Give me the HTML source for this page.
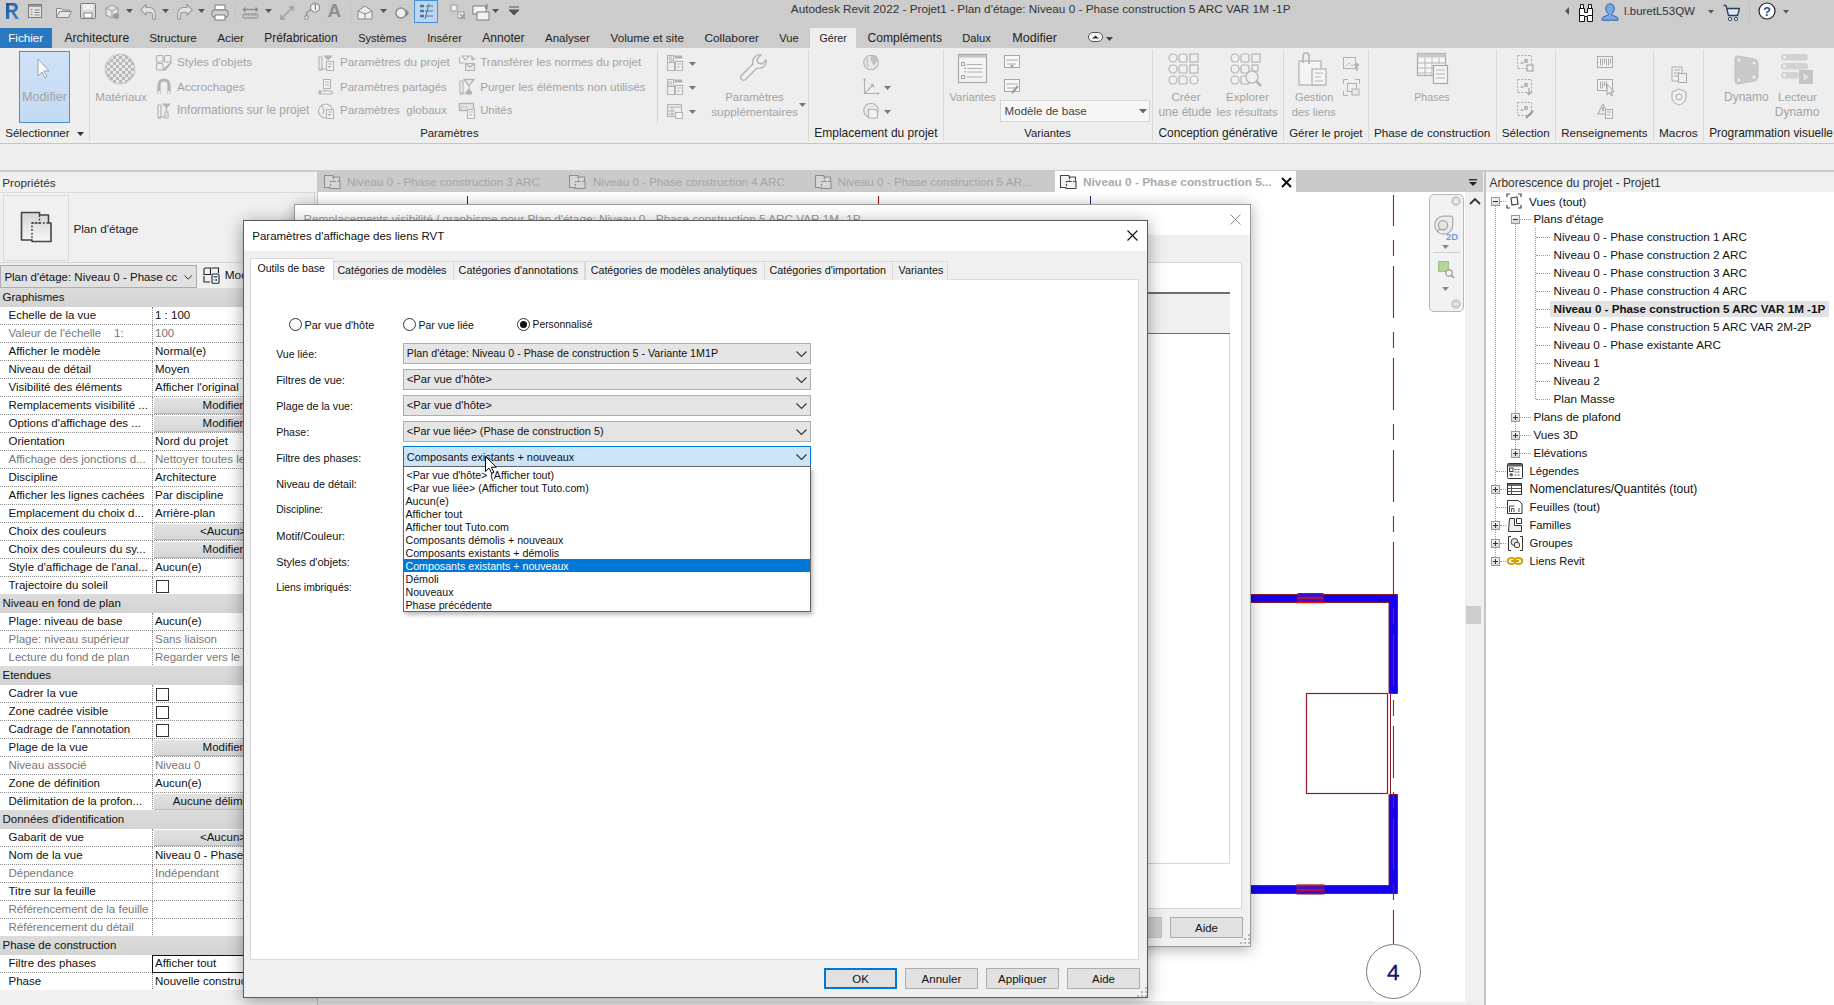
<!DOCTYPE html><html><head><meta charset="utf-8"><style>
html,body{margin:0;padding:0;width:1834px;height:1005px;overflow:hidden;background:#eee;}
body{position:relative;font-family:"Liberation Sans",sans-serif;}
body>div, .a{position:absolute;box-sizing:border-box;}
.t{position:absolute;white-space:nowrap;line-height:16px;height:16px;}
svg{position:absolute;overflow:visible}
</style></head><body>
<div style="left:0px;top:0px;width:1834px;height:48px;background:#cccccc"></div>
<div style="left:0px;top:48px;width:1834px;height:95px;background:#eeeeee"></div>
<div style="left:0px;top:143px;width:1834px;height:1px;background:#c6c6c6"></div>
<div style="left:0px;top:144px;width:1834px;height:26px;background:#eeeeee"></div>
<div style="left:0px;top:170px;width:1834px;height:2px;background:#cacaca"></div>
<div style="left:0px;top:172px;width:317px;height:833px;background:#f0f0f0"></div>
<div style="left:317px;top:172px;width:1px;height:833px;background:#c9c9c9"></div>
<div style="left:318px;top:172px;width:1165px;height:20px;background:#cacaca"></div>
<div style="left:318px;top:192px;width:1147px;height:810px;background:#ffffff"></div>
<div style="left:1465px;top:192px;width:18px;height:810px;background:#f0f0f0"></div>
<div style="left:318px;top:1001px;width:1056px;height:4px;background:#ececec"></div>
<div style="left:1483px;top:172px;width:2px;height:833px;background:#f0f0f0"></div>
<div style="left:1484px;top:172px;width:2px;height:833px;background:#c4c4c4"></div>
<div style="left:1486px;top:172px;width:348px;height:20px;background:#f0f0f0"></div>
<div style="left:1486px;top:192px;width:348px;height:813px;background:#ffffff"></div>
<div class="t" style="left:790.8px;top:0.6px;font-size:11.75px;color:#333;">Autodesk Revit 2022 - Projet1 - Plan d'étage: Niveau 0 - Phase construction 5 ARC VAR 1M -1P</div>
<svg style="left:5px;top:2px" width="15" height="18" viewBox="0 0 15 18"><defs><linearGradient id="rl" x1="0" y1="0" x2="1" y2="1"><stop offset="0" stop-color="#1b4f94"/><stop offset="1" stop-color="#3a8fd8"/></linearGradient></defs><path d="M1 1H7.5C11.5 1 13 3 13 5.5C13 8 11.5 9.5 9.2 10L14 17H10.5L6.5 10.3H4.2V17H1Z M4.2 3.6V7.8H7.2C9 7.8 9.8 7 9.8 5.7C9.8 4.4 9 3.6 7.2 3.6Z" fill="url(#rl)"/></svg>
<svg style="left:28px;top:4px" width="14" height="14" viewBox="0 0 14 14"><rect x="0.5" y="0.5" width="13" height="13" fill="#e4e4e4" stroke="#7a7a7a"/><rect x="1" y="1" width="12" height="2" fill="#9a9a9a"/><path d="M2.5 5.5h2M2.5 8h2M2.5 10.5h2M6.5 6h5M6.5 8.5h5M6.5 11h5" stroke="#7a7a7a" stroke-width="0.9"/></svg>
<svg style="left:56px;top:5px" width="16" height="14" viewBox="0 0 16 14"><path d="M0.5 3.5h5l1 1.5h7v2H4l-3.5 6z" fill="#eee" stroke="#8a8a8a"/><path d="M0.5 12.5l3-6h12l-3 6z" fill="#e4e4e4" stroke="#8a8a8a"/></svg>
<svg style="left:80px;top:3px" width="16" height="16" viewBox="0 0 16 16"><rect x="0.5" y="0.5" width="15" height="15" rx="1" fill="#d8d8d8" stroke="#7a7a7a"/><rect x="3" y="1" width="10" height="6" fill="#eee"/><rect x="4" y="10" width="8" height="5" fill="#fff" stroke="#888"/></svg>
<svg style="left:104px;top:3px" width="16" height="17" viewBox="0 0 16 17"><path d="M2 5l6-3 6 3v7l-6 3-6-3z" fill="#e3e3e3" stroke="#9a9a9a"/><path d="M2 5l6 3 6-3M8 8v7" stroke="#9a9a9a" fill="none"/><circle cx="12" cy="13" r="3" fill="#9a9a9a"/></svg>
<svg style="left:126px;top:9px" width="7" height="4" viewBox="0 0 7 4"><path d="M0 0H7L3.5 4Z" fill="#555"/></svg>
<svg style="left:140px;top:4px" width="16" height="16" viewBox="0 0 16 16"><path d="M6 0.5L0.7 5.8L6 11.1V8.2H9.8C11.6 8.2 12.6 9.2 12.6 11V15H15.3V10.2C15.3 6.2 12.8 3.5 9.8 3.5H6Z" fill="#e2e2e2" stroke="#9a9a9a" stroke-width="1.1" stroke-linejoin="round"/></svg>
<svg style="left:162px;top:9px" width="7" height="4" viewBox="0 0 7 4"><path d="M0 0H7L3.5 4Z" fill="#555"/></svg>
<svg style="left:177px;top:4px" width="16" height="16" viewBox="0 0 16 16"><path d="M10 0.5L15.3 5.8L10 11.1V8.2H6.2C4.4 8.2 3.4 9.2 3.4 11V15H0.7V10.2C0.7 6.2 3.2 3.5 6.2 3.5H10Z" fill="#e2e2e2" stroke="#9a9a9a" stroke-width="1.1" stroke-linejoin="round"/></svg>
<svg style="left:198px;top:9px" width="7" height="4" viewBox="0 0 7 4"><path d="M0 0H7L3.5 4Z" fill="#555"/></svg>
<svg style="left:211px;top:4px" width="18" height="17" viewBox="0 0 18 17"><rect x="4" y="1" width="10" height="5" fill="#fff" stroke="#7a7a7a"/><rect x="1" y="6" width="16" height="7" rx="2" fill="#d0d0d0" stroke="#7a7a7a"/><rect x="4" y="11" width="10" height="5" fill="#fff" stroke="#7a7a7a"/></svg>
<div style="left:235px;top:3px;width:1px;height:20px;background:#c2c2c2"></div>
<svg style="left:242px;top:5px" width="17" height="14" viewBox="0 0 17 14"><path d="M1.5 4.5h14" stroke="#8a8a8a" stroke-width="1.4"/><path d="M0.5 4.5l3-3v6zM16.5 4.5l-3-3v6z" fill="#8a8a8a"/><rect x="1" y="9" width="15" height="4" rx="1" fill="#c8c8c8" stroke="#8a8a8a"/><path d="M4 9v2M7 9v2M10 9v2M13 9v2" stroke="#8a8a8a" stroke-width="0.8"/></svg>
<svg style="left:265px;top:9px" width="7" height="4" viewBox="0 0 7 4"><path d="M0 0H7L3.5 4Z" fill="#555"/></svg>
<svg style="left:279px;top:5px" width="16" height="16" viewBox="0 0 16 16"><path d="M2 14L14 2M2 10v4h4M10 2h4v4" fill="none" stroke="#9a9a9a" stroke-width="1.3"/></svg>
<svg style="left:303px;top:2px" width="17" height="18" viewBox="0 0 17 18"><path d="M12 0.8l4.3 2.4v4.8L12 10.4 7.7 8V3.2z" fill="#f2f2f2" stroke="#8a8a8a" stroke-width="1.1"/><path d="M11.2 3.2l1.2-.8V8" fill="none" stroke="#777" stroke-width="1"/><path d="M8 7.5L3.5 11V14.5" fill="none" stroke="#8a8a8a" stroke-width="1.1"/><rect x="2" y="14" width="3" height="3" fill="#fff" stroke="#8a8a8a"/></svg>
<div class="t" style="left:327.5px;top:3.0px;font-size:19.00px;color:#8e8e8e;font-weight:bold;">A</div>
<div style="left:350px;top:3px;width:1px;height:20px;background:#c2c2c2"></div>
<svg style="left:357px;top:4px" width="16" height="16" viewBox="0 0 16 16"><path d="M1 7l7-5 7 5v8H1z" fill="#eee" stroke="#8a8a8a"/><path d="M1 7l7 3 7-3M8 10v5" fill="none" stroke="#8a8a8a"/></svg>
<svg style="left:380px;top:9px" width="7" height="4" viewBox="0 0 7 4"><path d="M0 0H7L3.5 4Z" fill="#555"/></svg>
<svg style="left:394px;top:5px" width="16" height="16" viewBox="0 0 16 16"><circle cx="7" cy="8" r="5" fill="#eee" stroke="#8a8a8a" stroke-width="1.5"/><path d="M12 4l3 4-3 4z" fill="#8a8a8a"/></svg>
<div style="left:414px;top:0px;width:24px;height:23px;background:#b9d7f4;border:1px solid #4a8fd6"></div>
<svg style="left:419px;top:4px" width="15" height="15" viewBox="0 0 15 15"><path d="M1 2h4M1 7h4M1 12h4" stroke="#5a6f8a" stroke-width="2.5"/><path d="M7 2h7M6 7h8M6 12h8M10 0L6 15" stroke="#5a6f8a" stroke-width="1"/></svg>
<svg style="left:450px;top:4px" width="16" height="16" viewBox="0 0 16 16"><rect x="1" y="1" width="6" height="6" fill="#eee" stroke="#9a9a9a"/><rect x="8" y="8" width="6" height="6" fill="#eee" stroke="#9a9a9a"/><path d="M10 10l5 5M15 10l-5 5" stroke="#9a9a9a" stroke-width="1.5"/></svg>
<svg style="left:472px;top:3px" width="18" height="18" viewBox="0 0 18 18"><rect x="1" y="3" width="13" height="8" fill="#f3f3f3" stroke="#7a7a7a"/><rect x="5" y="9" width="12" height="8" fill="#f3f3f3" stroke="#7a7a7a"/><path d="M15 1v5l-2-2" fill="none" stroke="#7a7a7a"/></svg>
<svg style="left:492px;top:9px" width="7" height="4" viewBox="0 0 7 4"><path d="M0 0H7L3.5 4Z" fill="#555"/></svg>
<svg style="left:509px;top:6px" width="10" height="10" viewBox="0 0 10 10"><path d="M0 1h10M0 4h10L5 9z" fill="#555" stroke="#555"/></svg>
<svg style="left:1565px;top:7px" width="5" height="9" viewBox="0 0 5 9"><path d="M4 0v8L0 4z" fill="#555"/></svg>
<svg style="left:1578px;top:4px" width="16" height="18" viewBox="0 0 16 18"><path d="M2.5 0.5h3v4h-3zM10.5 0.5h3v4h-3z" fill="#fff" stroke="#111"/><path d="M1.5 4.5h5v4h3v-4h5v13h-5v-5h-3v5h-5z" fill="#fff" stroke="#111" stroke-linejoin="round"/><path d="M1.5 11.5h5M9.5 11.5h5" stroke="#111"/></svg>
<svg style="left:1602px;top:3px" width="16" height="18" viewBox="0 0 16 18"><path d="M8 0.8c2.8 0 4.2 2.2 4.2 4.8 0 2.4-1.2 4.4-2.6 5.2v1l5.4 2.4c.6.3.9.8.9 1.4v1.6H0.1v-1.6c0-.6.3-1.1.9-1.4l5.4-2.4v-1C5 10 3.8 8 3.8 5.6 3.8 3 5.2 0.8 8 0.8z" fill="#7aa6e6" stroke="#2d5fb0" stroke-width="1"/></svg>
<div class="t" style="left:1624.0px;top:3.0px;font-size:11.51px;color:#333;">l.buretL53QW</div>
<svg style="left:1708px;top:10px" width="6" height="4" viewBox="0 0 6 4"><path d="M0 0h6L3 3.5z" fill="#555"/></svg>
<svg style="left:1723px;top:4px" width="18" height="18" viewBox="0 0 18 18"><path d="M0.5 1.5h2.5l2.5 10h9l2-7H4" fill="#dfe9f5" stroke="#2a3f5f" stroke-width="1.3" stroke-linejoin="round"/><circle cx="7" cy="15" r="1.6" fill="#fff" stroke="#2a3f5f"/><circle cx="13" cy="15" r="1.6" fill="#fff" stroke="#2a3f5f"/></svg>
<div style="left:1749px;top:2px;width:1px;height:20px;background:#bdbdbd"></div>
<svg style="left:1758px;top:2px" width="18" height="18" viewBox="0 0 18 18"><circle cx="9" cy="9" r="8" fill="#fff" stroke="#1d1d1d" stroke-width="1.2"/><text x="9" y="13.8" text-anchor="middle" font-family="Liberation Sans" font-weight="bold" font-size="13" fill="#1f4e9a">?</text></svg>
<svg style="left:1783px;top:10px" width="6" height="4" viewBox="0 0 6 4"><path d="M0 0h6L3 3.5z" fill="#555"/></svg>
<div style="left:0px;top:28px;width:52px;height:20px;background:#2a78c2"></div>
<div class="t" style="left:8.2px;top:29.5px;font-size:11.67px;color:#ffffff;">Fichier</div>
<div style="left:810px;top:28px;width:46px;height:20px;background:#eeeeee"></div>
<div class="t" style="left:64.4px;top:29.5px;font-size:12.15px;color:#222;">Architecture</div>
<div class="t" style="left:149.2px;top:29.5px;font-size:11.76px;color:#222;">Structure</div>
<div class="t" style="left:217.2px;top:29.5px;font-size:11.76px;color:#222;">Acier</div>
<div class="t" style="left:264.3px;top:29.5px;font-size:11.88px;color:#222;">Préfabrication</div>
<div class="t" style="left:358.2px;top:29.5px;font-size:11.03px;color:#222;">Systèmes</div>
<div class="t" style="left:427.2px;top:29.5px;font-size:11.15px;color:#222;">Insérer</div>
<div class="t" style="left:482.2px;top:29.5px;font-size:12.14px;color:#222;">Annoter</div>
<div class="t" style="left:545.0px;top:29.5px;font-size:11.52px;color:#222;">Analyser</div>
<div class="t" style="left:610.5px;top:29.5px;font-size:11.70px;color:#222;">Volume et site</div>
<div class="t" style="left:704.4px;top:29.5px;font-size:11.84px;color:#222;">Collaborer</div>
<div class="t" style="left:779.3px;top:29.5px;font-size:11.08px;color:#222;">Vue</div>
<div class="t" style="left:819.6px;top:29.5px;font-size:10.64px;color:#222;">Gérer</div>
<div class="t" style="left:867.6px;top:29.5px;font-size:12.06px;color:#222;">Compléments</div>
<div class="t" style="left:962.3px;top:29.5px;font-size:11.15px;color:#222;">Dalux</div>
<div class="t" style="left:1012.2px;top:29.5px;font-size:12.60px;color:#222;">Modifier</div>
<svg style="left:1088px;top:32px" width="15" height="10" viewBox="0 0 15 10"><rect x="0.5" y="0.5" width="14" height="9" rx="4.5" fill="#f4f4f4" stroke="#555"/><path d="M4 6.5l3.5-3 3.5 3z" fill="#333"/></svg>
<svg style="left:1106px;top:37px" width="7" height="4" viewBox="0 0 7 4"><path d="M0 0H7L3.5 4Z" fill="#444"/></svg>
<div style="left:89px;top:50px;width:1px;height:91px;background:#d9d9d9"></div>
<div style="left:808px;top:50px;width:1px;height:91px;background:#d9d9d9"></div>
<div style="left:943px;top:50px;width:1px;height:91px;background:#d9d9d9"></div>
<div style="left:1152px;top:50px;width:1px;height:91px;background:#d9d9d9"></div>
<div style="left:1283px;top:50px;width:1px;height:91px;background:#d9d9d9"></div>
<div style="left:1368px;top:50px;width:1px;height:91px;background:#d9d9d9"></div>
<div style="left:1496px;top:50px;width:1px;height:91px;background:#d9d9d9"></div>
<div style="left:1555px;top:50px;width:1px;height:91px;background:#d9d9d9"></div>
<div style="left:1653px;top:50px;width:1px;height:91px;background:#d9d9d9"></div>
<div style="left:1703px;top:50px;width:1px;height:91px;background:#d9d9d9"></div>
<div style="left:657px;top:52px;width:1px;height:71px;background:#d0d0d0"></div>
<div style="left:19px;top:51px;width:51px;height:72px;background:linear-gradient(#cfe2f6,#c3daf3);border:1px solid #4f8fd0"></div>
<svg style="left:37px;top:58px" width="14" height="22" viewBox="0 0 14 22"><path d="M1 1v17l4-4 3 6 2-1-3-6h5z" fill="#f6f9fc" stroke="#9aa4b0" stroke-width="1"/></svg>
<div class="t" style="left:22.1px;top:88.5px;font-size:12.60px;color:#a3a3a3;">Modifier</div>
<div class="t" style="left:5.2px;top:125.0px;font-size:11.60px;color:#222;">Sélectionner</div>
<svg style="left:76.5px;top:132px" width="7" height="4" viewBox="0 0 7 4"><path d="M0 0H7L3.5 4Z" fill="#333"/></svg>
<svg style="left:104px;top:53px" width="32" height="32" viewBox="0 0 32 32"><defs><pattern id="chk" width="6" height="6" patternUnits="userSpaceOnUse"><rect width="6" height="6" fill="#e8e8e8"/><rect width="3" height="3" fill="#b8b8b8"/><rect x="3" y="3" width="3" height="3" fill="#b8b8b8"/></pattern></defs><circle cx="16" cy="16" r="15" fill="url(#chk)" stroke="#c4c4c4"/></svg>
<div class="t" style="left:95.2px;top:88.5px;font-size:11.78px;color:#a3a3a3;">Matériaux</div>
<svg style="left:156px;top:55px" width="16" height="16" viewBox="0 0 16 16"><rect x="0.5" y="0.5" width="6.5" height="6.5" rx="1" fill="none" stroke="#b2b2b2" stroke-width="1.1"/><rect x="8.5" y="0.5" width="6.5" height="6.5" rx="1" fill="none" stroke="#b2b2b2" stroke-width="1.1"/><rect x="0.5" y="8.5" width="6.5" height="6.5" rx="1" fill="none" stroke="#b2b2b2" stroke-width="1.1"/><path d="M6 15l9-8 1 1-7 8z" fill="#b2b2b2"/></svg>
<div class="t" style="left:177.0px;top:54.0px;font-size:11.69px;color:#a3a3a3;">Styles d'objets</div>
<svg style="left:156px;top:79px" width="16" height="16" viewBox="0 0 16 16"><path d="M3 15V6a5 5 0 0 1 10 0v9" fill="none" stroke="#b2b2b2" stroke-width="3.2"/><path d="M3 12v3M13 12v3" stroke="#f4f4f4" stroke-width="1.6"/></svg>
<div class="t" style="left:177.0px;top:78.7px;font-size:11.71px;color:#a3a3a3;">Accrochages</div>
<svg style="left:156px;top:103px" width="16" height="16" viewBox="0 0 16 16"><path d="M2 2v12a1.5 1.5 0 0 0 3 0V2zM2 14h7" fill="none" stroke="#b2b2b2" stroke-width="1.1"/><path d="M6 0.5h9l-4.5 5z" fill="#b2b2b2"/><path d="M10.5 5v4M9 9h3v6H9z" fill="none" stroke="#b2b2b2" stroke-width="1.1"/></svg>
<div class="t" style="left:177.0px;top:102.4px;font-size:12.04px;color:#a3a3a3;">Informations sur le projet</div>
<svg style="left:318px;top:55px" width="16" height="16" viewBox="0 0 16 16"><path d="M1 2v12a1.5 1.5 0 0 0 3 0V2zM1 14h7" fill="none" stroke="#b2b2b2" stroke-width="1.1"/><path d="M5 0.5h10l-5 5z" fill="#b2b2b2"/><rect x="8.5" y="6.5" width="7" height="9" fill="#f2f2f2" stroke="#b2b2b2"/><path d="M10 9h4M10 12h2l1-1" stroke="#b2b2b2"/></svg>
<div class="t" style="left:340.0px;top:54.0px;font-size:11.76px;color:#a3a3a3;white-space:pre">Paramètres du projet</div>
<svg style="left:318px;top:79px" width="16" height="16" viewBox="0 0 16 16"><rect x="5.5" y="0.5" width="7" height="9" fill="#f2f2f2" stroke="#b2b2b2"/><path d="M7 3h4M7 6h4" stroke="#b2b2b2"/><rect x="0.5" y="11.5" width="3" height="4" fill="#b2b2b2"/><path d="M4 12c3-1 5 0 8 0s3 3 0 3H4" fill="none" stroke="#b2b2b2" stroke-width="1.1"/></svg>
<div class="t" style="left:340.0px;top:78.7px;font-size:11.44px;color:#a3a3a3;white-space:pre">Paramètres partagés</div>
<svg style="left:318px;top:103px" width="16" height="16" viewBox="0 0 16 16"><circle cx="7.5" cy="8" r="7" fill="none" stroke="#b2b2b2" stroke-width="1.1"/><path d="M4 3l2 4-1 4" fill="none" stroke="#b2b2b2" stroke-width="1.1"/><rect x="8.5" y="6.5" width="7" height="9" fill="#f2f2f2" stroke="#b2b2b2"/><path d="M10 9h4M10 12h2l1-1" stroke="#b2b2b2"/></svg>
<div class="t" style="left:340.0px;top:102.4px;font-size:11.58px;color:#a3a3a3;white-space:pre">Paramètres  globaux</div>
<svg style="left:459px;top:55px" width="16" height="16" viewBox="0 0 16 16"><path d="M0.5 2v6h5M3 1h7l-3.5 4z" fill="none" stroke="#b2b2b2" stroke-width="1.1"/><path d="M11 1c2 0 3 1 3 3M12 3l2 2 2-2" fill="none" stroke="#b2b2b2" stroke-width="1.1"/><rect x="6.5" y="8.5" width="9" height="7" fill="#e6e6e6" stroke="#b2b2b2"/><path d="M7 9l4 3 4-3" fill="none" stroke="#b2b2b2" stroke-width="1.1"/></svg>
<div class="t" style="left:480.2px;top:54.0px;font-size:11.59px;color:#a3a3a3;">Transférer les normes du projet</div>
<svg style="left:459px;top:79px" width="16" height="16" viewBox="0 0 16 16"><path d="M1 2v12a1.5 1.5 0 0 0 3 0V2zM1 14h6" fill="none" stroke="#b2b2b2" stroke-width="1.1"/><path d="M5 0.5h10l-5 6z" fill="none" stroke="#b2b2b2" stroke-width="1.3"/><path d="M10 6v4M7.5 13l2.5-3 2.5 3v2h-5z" fill="#b2b2b2" stroke="#b2b2b2"/></svg>
<div class="t" style="left:480.2px;top:78.7px;font-size:11.68px;color:#a3a3a3;">Purger les éléments non utilisés</div>
<svg style="left:459px;top:103px" width="16" height="16" viewBox="0 0 16 16"><rect x="0.5" y="0.5" width="14" height="7" fill="#e4e4e4" stroke="#b2b2b2" stroke-width="1.3"/><path d="M3 3v3M7 3v2" stroke="#b2b2b2"/><rect x="8.5" y="6.5" width="7" height="9" fill="#f2f2f2" stroke="#b2b2b2"/><path d="M10 9h4M10 12h3" stroke="#b2b2b2"/></svg>
<div class="t" style="left:480.2px;top:102.4px;font-size:11.33px;color:#a3a3a3;">Unités</div>
<div class="t" style="left:420.3px;top:125.0px;font-size:11.28px;color:#222;">Paramètres</div>
<svg style="left:667px;top:55px" width="16" height="16" viewBox="0 0 16 16"><rect x="0.5" y="0.5" width="6" height="7" fill="none" stroke="#b2b2b2"/><path d="M5 2H2v2h3v2H2" stroke="#b2b2b2" fill="none"/><rect x="7.5" y="0.5" width="8" height="3" fill="#b2b2b2"/><rect x="0.5" y="7.5" width="7" height="8" fill="none" stroke="#b2b2b2"/><rect x="8.5" y="6.5" width="7" height="9" fill="#f2f2f2" stroke="#b2b2b2"/><path d="M10 9h4M10 12h3" stroke="#b2b2b2"/></svg>
<svg style="left:689px;top:62px" width="7" height="4" viewBox="0 0 7 4"><path d="M0 0H7L3.5 4Z" fill="#777"/></svg>
<svg style="left:667px;top:79px" width="16" height="16" viewBox="0 0 16 16"><rect x="0.5" y="0.5" width="6" height="7" fill="none" stroke="#b2b2b2"/><path d="M2 2v5M4 2v5" stroke="#b2b2b2"/><rect x="7.5" y="0.5" width="8" height="3" fill="#b2b2b2"/><rect x="0.5" y="7.5" width="7" height="8" fill="none" stroke="#b2b2b2"/><rect x="8.5" y="6.5" width="7" height="9" fill="#f2f2f2" stroke="#b2b2b2"/><path d="M10 9h4M10 12h3" stroke="#b2b2b2"/></svg>
<svg style="left:689px;top:86px" width="7" height="4" viewBox="0 0 7 4"><path d="M0 0H7L3.5 4Z" fill="#777"/></svg>
<svg style="left:667px;top:103px" width="16" height="16" viewBox="0 0 16 16"><rect x="0.5" y="1.5" width="14" height="12" fill="none" stroke="#b2b2b2"/><path d="M1 4h14M5 4v10M1 8h7M1 11h7" stroke="#b2b2b2"/><rect x="8.5" y="9.5" width="7" height="6" fill="#f2f2f2" stroke="#b2b2b2"/></svg>
<svg style="left:689px;top:110px" width="7" height="4" viewBox="0 0 7 4"><path d="M0 0H7L3.5 4Z" fill="#777"/></svg>
<svg style="left:739px;top:54px" width="30" height="30" viewBox="0 0 30 30"><path d="M27 6a7 7 0 0 1-9 8L6 26a3 3 0 0 1-4-4L14 10a7 7 0 0 1 8-9l-4 4 1 4 4 1z" fill="#f0f0f0" stroke="#b0b0b0" stroke-width="1.3"/></svg>
<div class="t" style="left:725.3px;top:88.8px;font-size:11.32px;color:#a3a3a3;">Paramètres</div>
<div class="t" style="left:711.2px;top:103.5px;font-size:11.82px;color:#a3a3a3;">supplémentaires</div>
<svg style="left:799px;top:103px" width="7" height="4" viewBox="0 0 7 4"><path d="M0 0H7L3.5 4Z" fill="#777"/></svg>
<svg style="left:863px;top:54px" width="17" height="17" viewBox="0 0 17 17"><circle cx="8" cy="8.5" r="7.3" fill="#e6e6e6" stroke="#b4b4b4" stroke-width="1.1"/><path d="M3 4c1.5 1 2 2.5 1.2 4.5S4.5 12 5.5 13" fill="none" stroke="#bdbdbd" stroke-width="1.2"/><path d="M11 1.5a3 3 0 0 1 3 3c0 2-3 6.5-3 6.5s-3-4.5-3-6.5a3 3 0 0 1 3-3z" fill="#c4c4c4" stroke="#b0b0b0" stroke-width="0.8"/></svg>
<svg style="left:863px;top:78px" width="17" height="17" viewBox="0 0 17 17"><path d="M1.5 1v14.5H16M1.5 15.5L10 7" fill="none" stroke="#b0b0b0" stroke-width="1.1"/><path d="M7.5 6.5h3v3" fill="none" stroke="#b0b0b0"/><path d="M0 2.5l1.5-2 1.5 2M14.5 14l1.5 1.5-1.5 1.5" fill="none" stroke="#b0b0b0" stroke-width="0.9"/></svg>
<svg style="left:884px;top:86px" width="7" height="4" viewBox="0 0 7 4"><path d="M0 0H7L3.5 4Z" fill="#777"/></svg>
<svg style="left:863px;top:102px" width="17" height="17" viewBox="0 0 17 17"><circle cx="8" cy="8.5" r="7.3" fill="#e6e6e6" stroke="#b4b4b4" stroke-width="1.1"/><path d="M5.5 7.5h7l2 2v6.5h-9z" fill="#f2f2f2" stroke="#b0b0b0" stroke-width="1.1"/></svg>
<svg style="left:884px;top:110px" width="7" height="4" viewBox="0 0 7 4"><path d="M0 0H7L3.5 4Z" fill="#777"/></svg>
<div class="t" style="left:814.3px;top:125.0px;font-size:11.99px;color:#222;">Emplacement du projet</div>
<svg style="left:958px;top:54px" width="30" height="30" viewBox="0 0 30 30"><rect x="0.5" y="0.5" width="28" height="28" fill="#f4f4f4" stroke="#a8a8a8" stroke-width="1.2"/><rect x="1" y="1" width="27" height="2.5" fill="#c4c4c4"/><rect x="3.5" y="8.5" width="3" height="3" fill="#fff" stroke="#a0a0a0"/><rect x="3.5" y="21.5" width="3" height="3" fill="#fff" stroke="#a0a0a0"/><rect x="6.5" y="13.5" width="1.5" height="1.5" fill="#a0a0a0"/><rect x="6.5" y="17" width="1.5" height="1.5" fill="#a0a0a0"/><path d="M8.5 10.5h16M9.5 14.5h15M9.5 18h15M8.5 23h16" stroke="#aaa" stroke-width="0.9"/></svg>
<div class="t" style="left:949.4px;top:88.8px;font-size:11.18px;color:#a3a3a3;">Variantes</div>
<svg style="left:1004px;top:55px" width="16" height="16" viewBox="0 0 16 16"><rect x="0.5" y="0.5" width="15" height="12" fill="#f7f7f7" stroke="#a8a8a8"/><path d="M2 5h12M3 9h9" stroke="#aaa"/><path d="M6 10l4 0-2 3" fill="#8aa"/></svg>
<svg style="left:1004px;top:79px" width="16" height="16" viewBox="0 0 16 16"><rect x="0.5" y="0.5" width="15" height="12" fill="#f7f7f7" stroke="#a8a8a8"/><path d="M2 5h12M3 9h9" stroke="#aaa"/><path d="M8 14l6-7" stroke="#999" stroke-width="2"/></svg>
<div style="left:1000px;top:100px;width:150px;height:22px;background:#f7f7f7;border:1px solid #d6d6d6"></div>
<div class="t" style="left:1004.6px;top:103.0px;font-size:11.55px;color:#444;">Modèle de base</div>
<svg style="left:1139px;top:109px" width="8" height="5" viewBox="0 0 8 5"><path d="M0 0h8L4 4.5z" fill="#666"/></svg>
<div class="t" style="left:1024.3px;top:125.0px;font-size:11.25px;color:#222;">Variantes</div>
<svg style="left:1168px;top:53px" width="32" height="32" viewBox="0 0 32 32"><g fill="#f0f0f0" stroke="#b4b4b4" stroke-width="1.2"><circle cx="5" cy="5" r="4"/><rect x="11" y="1" width="8" height="8" rx="2"/><rect x="22" y="1" width="8" height="8"/><circle cx="5" cy="16" r="4"/><rect x="11" y="12" width="8" height="8" rx="2"/><rect x="22" y="12" width="8" height="8"/><circle cx="5" cy="27" r="4"/><rect x="11" y="23" width="8" height="8" rx="2"/><circle cx="26" cy="27" r="4"/></g></svg>
<div class="t" style="left:1171.5px;top:88.8px;font-size:11.60px;color:#a3a3a3;">Créer</div>
<div class="t" style="left:1158.5px;top:103.6px;font-size:11.91px;color:#a3a3a3;">une étude</div>
<svg style="left:1230px;top:53px" width="34" height="34" viewBox="0 0 34 34"><g fill="#f0f0f0" stroke="#b4b4b4" stroke-width="1.2"><circle cx="5" cy="5" r="4"/><rect x="11" y="1" width="8" height="8" rx="2"/><rect x="22" y="1" width="8" height="8"/><circle cx="5" cy="16" r="4"/><rect x="11" y="12" width="8" height="8" rx="2"/><rect x="22" y="12" width="6" height="6"/><circle cx="5" cy="27" r="4"/><rect x="11" y="23" width="8" height="8" rx="2"/><circle cx="22" cy="24" r="6"/><path d="M26 28l5 5" stroke-width="2.5"/></g></svg>
<div class="t" style="left:1226.0px;top:88.8px;font-size:11.55px;color:#a3a3a3;">Explorer</div>
<div class="t" style="left:1216.6px;top:103.6px;font-size:11.47px;color:#a3a3a3;">les résultats</div>
<div class="t" style="left:1158.4px;top:125.0px;font-size:11.93px;color:#222;">Conception générative</div>
<svg style="left:1297px;top:53px" width="32" height="34" viewBox="0 0 32 34"><rect x="2" y="8" width="22" height="24" fill="#f4f4f4" stroke="#b0b0b0" stroke-width="1.2"/><rect x="15" y="16" width="14" height="16" fill="#f4f4f4" stroke="#b0b0b0" stroke-width="1.2"/><path d="M18 20h8M18 24h6M18 28h8" stroke="#b8b8b8"/><path d="M6 10V3a3 3 0 0 1 6 0v8" fill="none" stroke="#b0b0b0" stroke-width="1.5"/></svg>
<div class="t" style="left:1295.0px;top:88.8px;font-size:11.14px;color:#a3a3a3;">Gestion</div>
<div class="t" style="left:1291.7px;top:103.6px;font-size:11.15px;color:#a3a3a3;">des liens</div>
<svg style="left:1343px;top:55px" width="17" height="17" viewBox="0 0 17 17"><rect x="0.5" y="2.5" width="12" height="11" fill="#f0f0f0" stroke="#b0b0b0"/><path d="M2 12l4-4 3 3 3-2" stroke="#bbb" fill="none"/><path d="M14 8v8M12 10h4" stroke="#aaa" stroke-width="1.4"/></svg>
<svg style="left:1343px;top:79px" width="17" height="17" viewBox="0 0 17 17"><path d="M0.5 5V0.5H5M12 0.5h4.5V5M0.5 12v4.5H5" fill="none" stroke="#b0b0b0"/><rect x="4.5" y="4.5" width="9" height="8" fill="#f0f0f0" stroke="#b0b0b0"/><rect x="9" y="10" width="7" height="6" fill="#e8e8e8" stroke="#b0b0b0"/></svg>
<div class="t" style="left:1289.2px;top:125.0px;font-size:11.47px;color:#222;">Gérer le projet</div>
<svg style="left:1417px;top:53px" width="32" height="32" viewBox="0 0 32 32"><rect x="0.5" y="0.5" width="28" height="22" fill="#f7f7f7" stroke="#a8a8a8" stroke-width="1.2"/><rect x="0.5" y="0.5" width="28" height="4" fill="#c8c8c8"/><path d="M1 10h28M1 15h28M1 20h14M8 5v17M15 5v17M22 5v6" stroke="#b4b4b4"/><rect x="16.5" y="12.5" width="14" height="18" fill="#f4f4f4" stroke="#a8a8a8" stroke-width="1.2"/><path d="M19 17h9M19 21h9M19 25h9" stroke="#b0b0b0"/></svg>
<div class="t" style="left:1414.3px;top:88.8px;font-size:10.58px;color:#a3a3a3;">Phases</div>
<div class="t" style="left:1373.9px;top:125.0px;font-size:11.77px;color:#222;">Phase de construction</div>
<svg style="left:1517px;top:55px" width="18" height="18" viewBox="0 0 18 18"><rect x="0.5" y="0.5" width="14" height="13" fill="none" stroke="#aaa" stroke-dasharray="2 1.5"/><path d="M3 9l2-3 2 3zM7 4h4v4H7z" fill="#bbb"/><rect x="10" y="10" width="6" height="6" fill="#eee" stroke="#999"/></svg>
<svg style="left:1517px;top:79px" width="18" height="18" viewBox="0 0 18 18"><rect x="0.5" y="0.5" width="14" height="13" fill="none" stroke="#aaa" stroke-dasharray="2 1.5"/><path d="M3 9l2-3 2 3zM7 4h4v4H7z" fill="#bbb"/><path d="M12 9v7M9 13l3 3 3-3" stroke="#999" fill="none"/></svg>
<svg style="left:1517px;top:102px" width="18" height="18" viewBox="0 0 18 18"><rect x="0.5" y="0.5" width="14" height="13" fill="none" stroke="#aaa" stroke-dasharray="2 1.5"/><path d="M3 9l2-3 2 3zM7 4h4v4H7z" fill="#bbb"/><path d="M9 16l7-7" stroke="#999" stroke-width="2"/></svg>
<div class="t" style="left:1501.8px;top:125.0px;font-size:11.67px;color:#222;">Sélection</div>
<svg style="left:1597px;top:56px" width="17" height="13" viewBox="0 0 17 13"><rect x="0.5" y="0.5" width="15" height="11" fill="#f2f2f2" stroke="#aaa"/><path d="M3.5 2.5v7M5.5 2.5v7M7.5 2.5v5M9.5 2.5v7M11.5 2.5v7M13.5 2.5v5" stroke="#aaa" stroke-width="1"/></svg>
<svg style="left:1597px;top:79px" width="19" height="19" viewBox="0 0 19 19"><rect x="0.5" y="0.5" width="15" height="11" fill="#f2f2f2" stroke="#aaa"/><path d="M3.5 2.5v7M5.5 2.5v7M7.5 2.5v5M9.5 2.5v7" stroke="#aaa" stroke-width="1"/><path d="M10 5v11l2.5-2.5 2 3.5 1.2-.7-2-3.4h3.3z" fill="#f2f2f2" stroke="#999" stroke-width="0.9"/></svg>
<svg style="left:1597px;top:103px" width="17" height="17" viewBox="0 0 17 17"><path d="M6 0.8L11 11H0.8z" fill="#e8e8e8" stroke="#aaa"/><path d="M6 4v4" stroke="#999" stroke-width="1.3"/><rect x="8.5" y="6.5" width="7" height="9" fill="#f2f2f2" stroke="#aaa"/><path d="M10 9h4M10 12h3" stroke="#aaa"/></svg>
<div class="t" style="left:1561.2px;top:125.0px;font-size:11.51px;color:#222;">Renseignements</div>
<svg style="left:1670px;top:66px" width="18" height="18" viewBox="0 0 18 18"><path d="M2 1h10v14H2z" fill="#f0f0f0" stroke="#aaa"/><path d="M4 4h6M4 7h6M4 10h4" stroke="#aaa"/><rect x="8.5" y="7.5" width="8" height="9" fill="#f0f0f0" stroke="#aaa"/></svg>
<svg style="left:1670px;top:88px" width="18" height="18" viewBox="0 0 18 18"><path d="M9 1l7 3v5c0 4-3 7-7 8-4-1-7-4-7-8V4z" fill="#f0f0f0" stroke="#aaa"/><circle cx="9" cy="9" r="3" fill="none" stroke="#aaa"/></svg>
<div class="t" style="left:1659.0px;top:125.0px;font-size:11.84px;color:#222;">Macros</div>
<svg style="left:1734px;top:54px" width="26" height="32" viewBox="0 0 26 32"><path d="M4 2L20 5C23 5.5 24 7 24 10V22C24 25 23 26.5 20 27L4 30C2 30.3 1 29 1 27V5C1 3 2 1.7 4 2Z" fill="#c9c9c9" stroke="#c0c0c0"/><circle cx="5" cy="6" r="1.5" fill="#f0f0f0"/><circle cx="20" cy="9" r="1.5" fill="#f0f0f0"/><circle cx="20" cy="23" r="1.5" fill="#f0f0f0"/><circle cx="5" cy="26" r="1.5" fill="#f0f0f0"/></svg>
<div class="t" style="left:1724.0px;top:88.8px;font-size:11.98px;color:#a3a3a3;">Dynamo</div>
<svg style="left:1780px;top:53px" width="34" height="32" viewBox="0 0 34 32"><rect x="1" y="1" width="27" height="6.5" rx="3.2" fill="#d2d2d2"/><rect x="1" y="10" width="27" height="6.5" rx="3.2" fill="#d2d2d2"/><rect x="1" y="19" width="18" height="6.5" rx="3.2" fill="#d2d2d2"/><circle cx="4.5" cy="4.2" r="1.4" fill="#f2f2f2"/><circle cx="4.5" cy="13.2" r="1.4" fill="#f2f2f2"/><circle cx="4.5" cy="22.2" r="1.4" fill="#f2f2f2"/><rect x="19" y="17" width="14" height="14" fill="#c4c4c4"/><path d="M23.5 20.5v7l5.5-3.5z" fill="#e4e4e4"/></svg>
<div class="t" style="left:1778.0px;top:88.8px;font-size:11.69px;color:#a3a3a3;">Lecteur</div>
<div class="t" style="left:1774.8px;top:103.6px;font-size:11.98px;color:#a3a3a3;">Dynamo</div>
<div class="t" style="left:1709.2px;top:125.0px;font-size:11.85px;color:#222;">Programmation visuelle</div>
<div class="t" style="left:2.2px;top:174.5px;font-size:11.72px;color:#333;">Propriétés</div>
<div style="left:0px;top:192px;width:317px;height:1px;background:#dadada"></div>
<div style="left:314px;top:192px;width:1px;height:71px;background:#d6d6d6"></div>
<div style="left:0px;top:262px;width:315px;height:1px;background:#d6d6d6"></div>
<div style="left:3px;top:195px;width:66px;height:66px;background:#f0f0f0;border:1px solid #d9d9d9"></div>
<svg style="left:20px;top:211px" width="33" height="33" viewBox="0 0 33 33"><defs><linearGradient id="pg" x1="0" y1="0" x2="0" y2="1"><stop offset="0" stop-color="#d4d4d4"/><stop offset="1" stop-color="#f6f6f6"/></linearGradient></defs><path d="M1.5 1.5H19.5V4H28.5V12H31V30.5H12V29H1.5Z" fill="url(#pg)" stroke="#444" stroke-width="1.6" stroke-linejoin="round"/><path d="M19.5 4V12H12V29" fill="none" stroke="#444" stroke-width="1.4" stroke-dasharray="2 1.6"/><path d="M12 12H28.5" stroke="#444" stroke-width="1.4" stroke-dasharray="2 1.6"/></svg>
<div class="t" style="left:73.4px;top:221.3px;font-size:11.76px;color:#222;">Plan d'étage</div>
<div style="left:0px;top:265px;width:197px;height:23px;background:#e1e1e1;border:1px solid #adadad"></div>
<div class="t" style="left:4.4px;top:269.3px;font-size:11.50px;color:#111;">Plan d'étage: Niveau 0 - Phase cc</div>
<svg style="left:184px;top:274.5px" width="9" height="5" viewBox="0 0 9 5"><path d="M0.5 0.5l3.7 3.7 3.7-3.7" fill="none" stroke="#333" stroke-width="1"/></svg>
<svg style="left:202.5px;top:266.5px" width="17" height="17" viewBox="0 0 17 17"><path d="M1 2.5a1.5 1.5 0 0 1 1.5-1.5H7.5V7.5H1z" fill="#f2f2f2" stroke="#222" stroke-width="1.1"/><path d="M8.5 1H15.5V6" fill="none" stroke="#222" stroke-width="1.1"/><path d="M1 9V15H7" fill="none" stroke="#222" stroke-width="1.1"/><rect x="9" y="7" width="7" height="9.3" rx="1" fill="#fff" stroke="#222" stroke-width="1.1"/><rect x="10.5" y="9" width="4" height="1.6" fill="#2f6db5"/><path d="M10.5 13h3.5M12.8 11.8l1.2 1.2-1.2 1.2" fill="none" stroke="#333" stroke-width="0.8"/></svg>
<div class="t" style="left:224.8px;top:266.5px;font-size:11.80px;color:#111;">Modifier le type</div>
<div style="left:0;top:288px;width:317px;height:702px;overflow:hidden">
<div class="a" style="left:0;top:0px;width:317px;height:19px;background:linear-gradient(#dcdcdc,#d4d4d4)"></div>
<div class="t" style="left:2.5px;top:1px;font-size:11.5px;color:#111">Graphismes</div>
<div class="a" style="left:0;top:19px;width:317px;height:18px;background:#fff;border-bottom:1px dotted #8a8a8a"></div>
<div class="a" style="left:152px;top:19px;width:1px;height:18px;border-left:1px dotted #8a8a8a"></div>
<div class="t" style="left:8.5px;top:19px;font-size:11.5px;color:#111;white-space:pre">Echelle de la vue</div>
<div class="t" style="left:155px;top:19px;font-size:11.5px;color:#111">1 : 100</div>
<div class="a" style="left:0;top:37px;width:317px;height:18px;background:#fff;border-bottom:1px dotted #8a8a8a"></div>
<div class="a" style="left:152px;top:37px;width:1px;height:18px;border-left:1px dotted #8a8a8a"></div>
<div class="t" style="left:8.5px;top:37px;font-size:11.5px;color:#777;white-space:pre">Valeur de l'échelle    1:</div>
<div class="t" style="left:155px;top:37px;font-size:11.5px;color:#777">100</div>
<div class="a" style="left:0;top:55px;width:317px;height:18px;background:#fff;border-bottom:1px dotted #8a8a8a"></div>
<div class="a" style="left:152px;top:55px;width:1px;height:18px;border-left:1px dotted #8a8a8a"></div>
<div class="t" style="left:8.5px;top:55px;font-size:11.5px;color:#111;white-space:pre">Afficher le modèle</div>
<div class="t" style="left:155px;top:55px;font-size:11.5px;color:#111">Normal(e)</div>
<div class="a" style="left:0;top:73px;width:317px;height:18px;background:#fff;border-bottom:1px dotted #8a8a8a"></div>
<div class="a" style="left:152px;top:73px;width:1px;height:18px;border-left:1px dotted #8a8a8a"></div>
<div class="t" style="left:8.5px;top:73px;font-size:11.5px;color:#111;white-space:pre">Niveau de détail</div>
<div class="t" style="left:155px;top:73px;font-size:11.5px;color:#111">Moyen</div>
<div class="a" style="left:0;top:91px;width:317px;height:18px;background:#fff;border-bottom:1px dotted #8a8a8a"></div>
<div class="a" style="left:152px;top:91px;width:1px;height:18px;border-left:1px dotted #8a8a8a"></div>
<div class="t" style="left:8.5px;top:91px;font-size:11.5px;color:#111;white-space:pre">Visibilité des éléments</div>
<div class="t" style="left:155px;top:91px;font-size:11.5px;color:#111">Afficher l'original</div>
<div class="a" style="left:0;top:109px;width:317px;height:18px;background:#fff;border-bottom:1px dotted #8a8a8a"></div>
<div class="a" style="left:152px;top:109px;width:1px;height:18px;border-left:1px dotted #8a8a8a"></div>
<div class="t" style="left:8.5px;top:109px;font-size:11.5px;color:#111;white-space:pre">Remplacements visibilité ...</div>
<div class="a" style="left:154px;top:110px;width:162px;height:16px;background:linear-gradient(#e2e2e2,#d6d6d6);border-bottom:1px solid #bdbdbd"></div>
<div class="t" style="left:153px;width:140px;text-align:center;top:109px;font-size:11.5px;color:#111">Modifier</div>
<div class="a" style="left:0;top:127px;width:317px;height:18px;background:#fff;border-bottom:1px dotted #8a8a8a"></div>
<div class="a" style="left:152px;top:127px;width:1px;height:18px;border-left:1px dotted #8a8a8a"></div>
<div class="t" style="left:8.5px;top:127px;font-size:11.5px;color:#111;white-space:pre">Options d'affichage des ...</div>
<div class="a" style="left:154px;top:128px;width:162px;height:16px;background:linear-gradient(#e2e2e2,#d6d6d6);border-bottom:1px solid #bdbdbd"></div>
<div class="t" style="left:153px;width:140px;text-align:center;top:127px;font-size:11.5px;color:#111">Modifier</div>
<div class="a" style="left:0;top:145px;width:317px;height:18px;background:#fff;border-bottom:1px dotted #8a8a8a"></div>
<div class="a" style="left:152px;top:145px;width:1px;height:18px;border-left:1px dotted #8a8a8a"></div>
<div class="t" style="left:8.5px;top:145px;font-size:11.5px;color:#111;white-space:pre">Orientation</div>
<div class="t" style="left:155px;top:145px;font-size:11.5px;color:#111">Nord du projet</div>
<div class="a" style="left:0;top:163px;width:317px;height:18px;background:#fff;border-bottom:1px dotted #8a8a8a"></div>
<div class="a" style="left:152px;top:163px;width:1px;height:18px;border-left:1px dotted #8a8a8a"></div>
<div class="t" style="left:8.5px;top:163px;font-size:11.5px;color:#777;white-space:pre">Affichage des jonctions d...</div>
<div class="t" style="left:155px;top:163px;font-size:11.5px;color:#777">Nettoyer toutes les</div>
<div class="a" style="left:0;top:181px;width:317px;height:18px;background:#fff;border-bottom:1px dotted #8a8a8a"></div>
<div class="a" style="left:152px;top:181px;width:1px;height:18px;border-left:1px dotted #8a8a8a"></div>
<div class="t" style="left:8.5px;top:181px;font-size:11.5px;color:#111;white-space:pre">Discipline</div>
<div class="t" style="left:155px;top:181px;font-size:11.5px;color:#111">Architecture</div>
<div class="a" style="left:0;top:199px;width:317px;height:18px;background:#fff;border-bottom:1px dotted #8a8a8a"></div>
<div class="a" style="left:152px;top:199px;width:1px;height:18px;border-left:1px dotted #8a8a8a"></div>
<div class="t" style="left:8.5px;top:199px;font-size:11.5px;color:#111;white-space:pre">Afficher les lignes cachées</div>
<div class="t" style="left:155px;top:199px;font-size:11.5px;color:#111">Par discipline</div>
<div class="a" style="left:0;top:217px;width:317px;height:18px;background:#fff;border-bottom:1px dotted #8a8a8a"></div>
<div class="a" style="left:152px;top:217px;width:1px;height:18px;border-left:1px dotted #8a8a8a"></div>
<div class="t" style="left:8.5px;top:217px;font-size:11.5px;color:#111;white-space:pre">Emplacement du choix d...</div>
<div class="t" style="left:155px;top:217px;font-size:11.5px;color:#111">Arrière-plan</div>
<div class="a" style="left:0;top:235px;width:317px;height:18px;background:#fff;border-bottom:1px dotted #8a8a8a"></div>
<div class="a" style="left:152px;top:235px;width:1px;height:18px;border-left:1px dotted #8a8a8a"></div>
<div class="t" style="left:8.5px;top:235px;font-size:11.5px;color:#111;white-space:pre">Choix des couleurs</div>
<div class="a" style="left:154px;top:236px;width:162px;height:16px;background:linear-gradient(#e2e2e2,#d6d6d6);border-bottom:1px solid #bdbdbd"></div>
<div class="t" style="left:153px;width:140px;text-align:center;top:235px;font-size:11.5px;color:#111">&lt;Aucun&gt;</div>
<div class="a" style="left:0;top:253px;width:317px;height:18px;background:#fff;border-bottom:1px dotted #8a8a8a"></div>
<div class="a" style="left:152px;top:253px;width:1px;height:18px;border-left:1px dotted #8a8a8a"></div>
<div class="t" style="left:8.5px;top:253px;font-size:11.5px;color:#111;white-space:pre">Choix des couleurs du sy...</div>
<div class="a" style="left:154px;top:254px;width:162px;height:16px;background:linear-gradient(#e2e2e2,#d6d6d6);border-bottom:1px solid #bdbdbd"></div>
<div class="t" style="left:153px;width:140px;text-align:center;top:253px;font-size:11.5px;color:#111">Modifier</div>
<div class="a" style="left:0;top:271px;width:317px;height:18px;background:#fff;border-bottom:1px dotted #8a8a8a"></div>
<div class="a" style="left:152px;top:271px;width:1px;height:18px;border-left:1px dotted #8a8a8a"></div>
<div class="t" style="left:8.5px;top:271px;font-size:11.5px;color:#111;white-space:pre">Style d'affichage de l'anal...</div>
<div class="t" style="left:155px;top:271px;font-size:11.5px;color:#111">Aucun(e)</div>
<div class="a" style="left:0;top:289px;width:317px;height:18px;background:#fff;border-bottom:1px dotted #8a8a8a"></div>
<div class="a" style="left:152px;top:289px;width:1px;height:18px;border-left:1px dotted #8a8a8a"></div>
<div class="t" style="left:8.5px;top:289px;font-size:11.5px;color:#111;white-space:pre">Trajectoire du soleil</div>
<div class="a" style="left:156px;top:292px;width:13px;height:13px;background:#fff;border:1px solid #333"></div>
<div class="a" style="left:0;top:306px;width:317px;height:19px;background:linear-gradient(#dcdcdc,#d4d4d4)"></div>
<div class="t" style="left:2.5px;top:307px;font-size:11.5px;color:#111">Niveau en fond de plan</div>
<div class="a" style="left:0;top:325px;width:317px;height:18px;background:#fff;border-bottom:1px dotted #8a8a8a"></div>
<div class="a" style="left:152px;top:325px;width:1px;height:18px;border-left:1px dotted #8a8a8a"></div>
<div class="t" style="left:8.5px;top:325px;font-size:11.5px;color:#111;white-space:pre">Plage: niveau de base</div>
<div class="t" style="left:155px;top:325px;font-size:11.5px;color:#111">Aucun(e)</div>
<div class="a" style="left:0;top:343px;width:317px;height:18px;background:#fff;border-bottom:1px dotted #8a8a8a"></div>
<div class="a" style="left:152px;top:343px;width:1px;height:18px;border-left:1px dotted #8a8a8a"></div>
<div class="t" style="left:8.5px;top:343px;font-size:11.5px;color:#777;white-space:pre">Plage: niveau supérieur</div>
<div class="t" style="left:155px;top:343px;font-size:11.5px;color:#777">Sans liaison</div>
<div class="a" style="left:0;top:361px;width:317px;height:18px;background:#fff;border-bottom:1px dotted #8a8a8a"></div>
<div class="a" style="left:152px;top:361px;width:1px;height:18px;border-left:1px dotted #8a8a8a"></div>
<div class="t" style="left:8.5px;top:361px;font-size:11.5px;color:#777;white-space:pre">Lecture du fond de plan</div>
<div class="t" style="left:155px;top:361px;font-size:11.5px;color:#777">Regarder vers le bas</div>
<div class="a" style="left:0;top:378px;width:317px;height:19px;background:linear-gradient(#dcdcdc,#d4d4d4)"></div>
<div class="t" style="left:2.5px;top:379px;font-size:11.5px;color:#111">Etendues</div>
<div class="a" style="left:0;top:397px;width:317px;height:18px;background:#fff;border-bottom:1px dotted #8a8a8a"></div>
<div class="a" style="left:152px;top:397px;width:1px;height:18px;border-left:1px dotted #8a8a8a"></div>
<div class="t" style="left:8.5px;top:397px;font-size:11.5px;color:#111;white-space:pre">Cadrer la vue</div>
<div class="a" style="left:156px;top:400px;width:13px;height:13px;background:#fff;border:1px solid #333"></div>
<div class="a" style="left:0;top:415px;width:317px;height:18px;background:#fff;border-bottom:1px dotted #8a8a8a"></div>
<div class="a" style="left:152px;top:415px;width:1px;height:18px;border-left:1px dotted #8a8a8a"></div>
<div class="t" style="left:8.5px;top:415px;font-size:11.5px;color:#111;white-space:pre">Zone cadrée visible</div>
<div class="a" style="left:156px;top:418px;width:13px;height:13px;background:#fff;border:1px solid #333"></div>
<div class="a" style="left:0;top:433px;width:317px;height:18px;background:#fff;border-bottom:1px dotted #8a8a8a"></div>
<div class="a" style="left:152px;top:433px;width:1px;height:18px;border-left:1px dotted #8a8a8a"></div>
<div class="t" style="left:8.5px;top:433px;font-size:11.5px;color:#111;white-space:pre">Cadrage de l'annotation</div>
<div class="a" style="left:156px;top:436px;width:13px;height:13px;background:#fff;border:1px solid #333"></div>
<div class="a" style="left:0;top:451px;width:317px;height:18px;background:#fff;border-bottom:1px dotted #8a8a8a"></div>
<div class="a" style="left:152px;top:451px;width:1px;height:18px;border-left:1px dotted #8a8a8a"></div>
<div class="t" style="left:8.5px;top:451px;font-size:11.5px;color:#111;white-space:pre">Plage de la vue</div>
<div class="a" style="left:154px;top:452px;width:162px;height:16px;background:linear-gradient(#e2e2e2,#d6d6d6);border-bottom:1px solid #bdbdbd"></div>
<div class="t" style="left:153px;width:140px;text-align:center;top:451px;font-size:11.5px;color:#111">Modifier</div>
<div class="a" style="left:0;top:469px;width:317px;height:18px;background:#fff;border-bottom:1px dotted #8a8a8a"></div>
<div class="a" style="left:152px;top:469px;width:1px;height:18px;border-left:1px dotted #8a8a8a"></div>
<div class="t" style="left:8.5px;top:469px;font-size:11.5px;color:#777;white-space:pre">Niveau associé</div>
<div class="t" style="left:155px;top:469px;font-size:11.5px;color:#777">Niveau 0</div>
<div class="a" style="left:0;top:487px;width:317px;height:18px;background:#fff;border-bottom:1px dotted #8a8a8a"></div>
<div class="a" style="left:152px;top:487px;width:1px;height:18px;border-left:1px dotted #8a8a8a"></div>
<div class="t" style="left:8.5px;top:487px;font-size:11.5px;color:#111;white-space:pre">Zone de définition</div>
<div class="t" style="left:155px;top:487px;font-size:11.5px;color:#111">Aucun(e)</div>
<div class="a" style="left:0;top:505px;width:317px;height:18px;background:#fff;border-bottom:1px dotted #8a8a8a"></div>
<div class="a" style="left:152px;top:505px;width:1px;height:18px;border-left:1px dotted #8a8a8a"></div>
<div class="t" style="left:8.5px;top:505px;font-size:11.5px;color:#111;white-space:pre">Délimitation de la profon...</div>
<div class="a" style="left:154px;top:506px;width:162px;height:16px;background:linear-gradient(#e2e2e2,#d6d6d6);border-bottom:1px solid #bdbdbd"></div>
<div class="t" style="left:153px;width:140px;text-align:center;top:505px;font-size:11.5px;color:#111">Aucune délimitation</div>
<div class="a" style="left:0;top:522px;width:317px;height:19px;background:linear-gradient(#dcdcdc,#d4d4d4)"></div>
<div class="t" style="left:2.5px;top:523px;font-size:11.5px;color:#111">Données d'identification</div>
<div class="a" style="left:0;top:541px;width:317px;height:18px;background:#fff;border-bottom:1px dotted #8a8a8a"></div>
<div class="a" style="left:152px;top:541px;width:1px;height:18px;border-left:1px dotted #8a8a8a"></div>
<div class="t" style="left:8.5px;top:541px;font-size:11.5px;color:#111;white-space:pre">Gabarit de vue</div>
<div class="a" style="left:154px;top:542px;width:162px;height:16px;background:linear-gradient(#e2e2e2,#d6d6d6);border-bottom:1px solid #bdbdbd"></div>
<div class="t" style="left:153px;width:140px;text-align:center;top:541px;font-size:11.5px;color:#111">&lt;Aucun&gt;</div>
<div class="a" style="left:0;top:559px;width:317px;height:18px;background:#fff;border-bottom:1px dotted #8a8a8a"></div>
<div class="a" style="left:152px;top:559px;width:1px;height:18px;border-left:1px dotted #8a8a8a"></div>
<div class="t" style="left:8.5px;top:559px;font-size:11.5px;color:#111;white-space:pre">Nom de la vue</div>
<div class="t" style="left:155px;top:559px;font-size:11.5px;color:#111">Niveau 0 - Phase construction 5</div>
<div class="a" style="left:0;top:577px;width:317px;height:18px;background:#fff;border-bottom:1px dotted #8a8a8a"></div>
<div class="a" style="left:152px;top:577px;width:1px;height:18px;border-left:1px dotted #8a8a8a"></div>
<div class="t" style="left:8.5px;top:577px;font-size:11.5px;color:#777;white-space:pre">Dépendance</div>
<div class="t" style="left:155px;top:577px;font-size:11.5px;color:#777">Indépendant</div>
<div class="a" style="left:0;top:595px;width:317px;height:18px;background:#fff;border-bottom:1px dotted #8a8a8a"></div>
<div class="a" style="left:152px;top:595px;width:1px;height:18px;border-left:1px dotted #8a8a8a"></div>
<div class="t" style="left:8.5px;top:595px;font-size:11.5px;color:#111;white-space:pre">Titre sur la feuille</div>
<div class="t" style="left:155px;top:595px;font-size:11.5px;color:#111"></div>
<div class="a" style="left:0;top:613px;width:317px;height:18px;background:#fff;border-bottom:1px dotted #8a8a8a"></div>
<div class="a" style="left:152px;top:613px;width:1px;height:18px;border-left:1px dotted #8a8a8a"></div>
<div class="t" style="left:8.5px;top:613px;font-size:11.5px;color:#777;white-space:pre">Référencement de la feuille</div>
<div class="t" style="left:155px;top:613px;font-size:11.5px;color:#777"></div>
<div class="a" style="left:0;top:631px;width:317px;height:18px;background:#fff;border-bottom:1px dotted #8a8a8a"></div>
<div class="a" style="left:152px;top:631px;width:1px;height:18px;border-left:1px dotted #8a8a8a"></div>
<div class="t" style="left:8.5px;top:631px;font-size:11.5px;color:#777;white-space:pre">Référencement du détail</div>
<div class="t" style="left:155px;top:631px;font-size:11.5px;color:#777"></div>
<div class="a" style="left:0;top:648px;width:317px;height:19px;background:linear-gradient(#dcdcdc,#d4d4d4)"></div>
<div class="t" style="left:2.5px;top:649px;font-size:11.5px;color:#111">Phase de construction</div>
<div class="a" style="left:0;top:667px;width:317px;height:18px;background:#fff;border-bottom:1px dotted #8a8a8a"></div>
<div class="a" style="left:152px;top:667px;width:1px;height:18px;border-left:1px dotted #8a8a8a"></div>
<div class="t" style="left:8.5px;top:667px;font-size:11.5px;color:#111;white-space:pre">Filtre des phases</div>
<div class="a" style="left:152px;top:667px;width:165px;height:18px;background:#fff;border:1px solid #111"></div>
<div class="t" style="left:155px;top:667px;font-size:11.5px;color:#111">Afficher tout</div>
<div class="a" style="left:0;top:685px;width:317px;height:18px;background:#fff;border-bottom:1px dotted #8a8a8a"></div>
<div class="a" style="left:152px;top:685px;width:1px;height:18px;border-left:1px dotted #8a8a8a"></div>
<div class="t" style="left:8.5px;top:685px;font-size:11.5px;color:#111;white-space:pre">Phase</div>
<div class="t" style="left:155px;top:685px;font-size:11.5px;color:#111">Nouvelle construction</div>
</div>
<svg style="left:324px;top:175px" width="17" height="15" viewBox="0 0 17 15"><path d="M0.5 0.5H9V2H15.5V6H16V13.5H6V12.5H0.5Z" fill="#d6d6d6" stroke="#8e8e8e" stroke-width="1.1" stroke-linejoin="round"/><path d="M9.5 2V6.5H6.5V12.5M6.5 6.5H15.5" fill="none" stroke="#8e8e8e" stroke-width="1.2" stroke-dasharray="2 1.3"/></svg>
<div class="t" style="left:347.0px;top:174.0px;font-size:11.69px;color:#a5a5a5;">Niveau 0 - Phase construction 3 ARC</div>
<svg style="left:569px;top:175px" width="17" height="15" viewBox="0 0 17 15"><path d="M0.5 0.5H9V2H15.5V6H16V13.5H6V12.5H0.5Z" fill="#d6d6d6" stroke="#8e8e8e" stroke-width="1.1" stroke-linejoin="round"/><path d="M9.5 2V6.5H6.5V12.5M6.5 6.5H15.5" fill="none" stroke="#8e8e8e" stroke-width="1.2" stroke-dasharray="2 1.3"/></svg>
<div class="t" style="left:593.0px;top:174.0px;font-size:11.63px;color:#a5a5a5;">Niveau 0 - Phase construction 4 ARC</div>
<svg style="left:815px;top:175px" width="17" height="15" viewBox="0 0 17 15"><path d="M0.5 0.5H9V2H15.5V6H16V13.5H6V12.5H0.5Z" fill="#d6d6d6" stroke="#8e8e8e" stroke-width="1.1" stroke-linejoin="round"/><path d="M9.5 2V6.5H6.5V12.5M6.5 6.5H15.5" fill="none" stroke="#8e8e8e" stroke-width="1.2" stroke-dasharray="2 1.3"/></svg>
<div class="t" style="left:837.4px;top:174.0px;font-size:11.69px;color:#a5a5a5;">Niveau 0 - Phase construction 5 AR...</div>
<div style="left:1055px;top:171px;width:241px;height:21px;background:#ffffff"></div>
<svg style="left:1060px;top:175px" width="17" height="15" viewBox="0 0 17 15"><path d="M0.5 0.5H9V2H15.5V6H16V13.5H6V12.5H0.5Z" fill="#f4f4f4" stroke="#444" stroke-width="1.1" stroke-linejoin="round"/><path d="M9.5 2V6.5H6.5V12.5M6.5 6.5H15.5" fill="none" stroke="#444" stroke-width="1.2" stroke-dasharray="2 1.3"/></svg>
<div class="t" style="left:1083.0px;top:174.0px;font-size:11.84px;color:#aaaaaa;font-weight:bold;">Niveau 0 - Phase construction 5...</div>
<svg style="left:1281px;top:177px" width="11" height="11" viewBox="0 0 11 11"><path d="M1 1l9 9M10 1l-9 9" stroke="#111" stroke-width="2"/></svg>
<svg style="left:1469px;top:179px" width="8" height="8" viewBox="0 0 8 8"><path d="M0 0.7h8" stroke="#222" stroke-width="1.3"/><path d="M0 3h8L4 7z" fill="#222"/></svg>
<div style="left:467px;top:196px;width:1px;height:8px;background:#22227a"></div>
<div style="left:878px;top:196px;width:1px;height:8px;background:#a01515"></div>
<div style="left:1090px;top:196px;width:1px;height:8px;background:#22227a"></div>
<svg style="left:1240px;top:585px" width="170" height="320" viewBox="0 0 170 320"><path d="M10 9.5H157.5V108.5H149V17.5H10Z" fill="#1400ee" stroke="#8e1a2a" stroke-width="1"/><path d="M10 308.5H157.5V209.5H149V300.5H10Z" fill="#1400ee" stroke="#8e1a2a" stroke-width="1"/><rect x="58" y="8.5" width="25" height="9" fill="#3a10c8" stroke="#8e1a2a"/><path d="M56 17.5h29M58 13h25" stroke="#e01010" stroke-width="1.3"/><rect x="57" y="300" width="27" height="9" fill="#3a10c8" stroke="#8e1a2a"/><path d="M57 300.5h27M57 305h27" stroke="#e01010" stroke-width="1.3"/><rect x="66.5" y="108.5" width="81" height="100" fill="none" stroke="#8e1a2a" stroke-width="1.2"/><path d="M150.5 108V209M147.5 108V209" stroke="#8e1a2a" stroke-width="1"/></svg>
<svg style="left:1380px;top:192px" width="30" height="810" viewBox="0 0 30 810"><path d="M13.5 3V752" stroke="#a51d1d" stroke-width="1.1" stroke-dasharray="52 14 16 10" stroke-dashoffset="21" fill="none"/><circle cx="13.5" cy="779.5" r="27" fill="#fff" stroke="#7a7a7a" stroke-width="1"/><text x="13.2" y="787.6" text-anchor="middle" font-family="Liberation Sans" font-size="22.5" fill="#14146e" stroke="#14146e" stroke-width="0.35">4</text></svg>
<svg style="left:1469px;top:198px" width="12" height="8" viewBox="0 0 12 8"><path d="M1 6l5-5 5 5" fill="none" stroke="#333" stroke-width="1.8"/></svg>
<div style="left:1466px;top:606px;width:15px;height:18px;background:#cdcdcd"></div>
<div style="left:1429px;top:194px;width:35px;height:118px;background:#f2f2f2;border:1.5px solid #b8b8b8;border-radius:5px"></div>
<svg style="left:1451px;top:196px" width="10" height="10" viewBox="0 0 10 10"><circle cx="5" cy="5" r="4.3" fill="#d4d4d4" stroke="#b8b8b8" stroke-width="0.8"/><path d="M3.2 3.2l3.6 3.6M6.8 3.2l-3.6 3.6" stroke="#f6f6f6" stroke-width="1.2"/></svg>
<svg style="left:1433px;top:215px" width="22" height="22" viewBox="0 0 22 22"><path d="M10 1.2H17.5a2.2 2.2 0 0 1 2.2 2.2V10A9 9 0 1 1 10 1.2Z" fill="#ececec" stroke="#a8a8a8" stroke-width="1.2"/><circle cx="10" cy="10.2" r="4.6" fill="#e6e6e6" stroke="#a0a0a0" stroke-width="1.2"/><path d="M6.6 13.6L4 16.5" stroke="#a0a0a0" stroke-width="1.2"/></svg>
<div class="t" style="left:1446.0px;top:229.0px;font-size:9.50px;color:#6b9fd4;font-weight:bold;">2D</div>
<svg style="left:1442px;top:245px" width="7" height="4" viewBox="0 0 7 4"><path d="M0 0h7L3.5 4z" fill="#888"/></svg>
<div style="left:1433px;top:252px;width:27px;height:1px;background:#cfcfcf"></div>
<svg style="left:1438px;top:261px" width="18" height="18" viewBox="0 0 18 18"><rect x="0.5" y="0.5" width="10" height="10" fill="#b5d69b" stroke="#9cc27e"/><circle cx="11" cy="12" r="3.2" fill="#f4f4f4" stroke="#999" stroke-width="1.2"/><path d="M13.3 14.3l2.7 2.7" stroke="#999" stroke-width="1.6"/></svg>
<svg style="left:1442px;top:287px" width="7" height="4" viewBox="0 0 7 4"><path d="M0 0h7L3.5 4z" fill="#888"/></svg>
<svg style="left:1451px;top:299px" width="10" height="10" viewBox="0 0 10 10"><circle cx="5" cy="5" r="4.3" fill="#d4d4d4" stroke="#b8b8b8" stroke-width="0.8"/><path d="M2.8 5h4.4" stroke="#f6f6f6" stroke-width="1.4"/></svg>
<div class="t" style="left:1489.6px;top:174.8px;font-size:11.88px;color:#333;">Arborescence du projet - Projet1</div>
<div style="left:1495px;top:206px;width:1px;height:355px;border-left:1px dotted #999"></div>
<div style="left:1515px;top:224px;width:1px;height:229px;border-left:1px dotted #999"></div>
<div style="left:1535px;top:228px;width:1px;height:171px;border-left:1px dotted #999"></div>
<svg style="left:1491px;top:197px" width="9" height="9" viewBox="0 0 9 9"><defs><linearGradient id="bx" x1="0" y1="0" x2="0" y2="1"><stop offset="0" stop-color="#f6f6f6"/><stop offset="1" stop-color="#d6d6d6"/></linearGradient></defs><rect x="0.5" y="0.5" width="8" height="8" fill="url(#bx)" stroke="#9a9a9a"/><path d="M2 4.5h5" stroke="#333"/></svg>
<div style="left:1500px;top:201px;width:6px;height:1px;border-top:1px dotted #999"></div>
<svg style="left:1506px;top:193px" width="16" height="16" viewBox="0 0 16 16"><path d="M1 4V1h3M12 1h3v3M15 12v3h-3M4 15H1v-3" fill="none" stroke="#444" stroke-width="1.2"/><path d="M5 5l6-1 1 7-6 1z" fill="none" stroke="#444" stroke-width="1.2"/></svg>
<div class="t" style="left:1529.0px;top:193.6px;font-size:11.81px;color:#111;">Vues (tout)</div>
<svg style="left:1511px;top:215px" width="9" height="9" viewBox="0 0 9 9"><defs><linearGradient id="bx" x1="0" y1="0" x2="0" y2="1"><stop offset="0" stop-color="#f6f6f6"/><stop offset="1" stop-color="#d6d6d6"/></linearGradient></defs><rect x="0.5" y="0.5" width="8" height="8" fill="url(#bx)" stroke="#9a9a9a"/><path d="M2 4.5h5" stroke="#333"/></svg>
<div style="left:1520px;top:219px;width:11px;height:1px;border-top:1px dotted #999"></div>
<div class="t" style="left:1533.4px;top:211.0px;font-size:11.61px;color:#111;">Plans d'étage</div>
<div style="left:1536px;top:237px;width:14px;height:1px;border-top:1px dotted #999"></div>
<div class="t" style="left:1553.5px;top:229.0px;font-size:11.72px;color:#111;">Niveau 0 - Phase construction 1 ARC</div>
<div style="left:1536px;top:255px;width:14px;height:1px;border-top:1px dotted #999"></div>
<div class="t" style="left:1553.5px;top:247.0px;font-size:11.72px;color:#111;">Niveau 0 - Phase construction 2 ARC</div>
<div style="left:1536px;top:273px;width:14px;height:1px;border-top:1px dotted #999"></div>
<div class="t" style="left:1553.5px;top:265.0px;font-size:11.72px;color:#111;">Niveau 0 - Phase construction 3 ARC</div>
<div style="left:1536px;top:291px;width:14px;height:1px;border-top:1px dotted #999"></div>
<div class="t" style="left:1553.5px;top:283.0px;font-size:11.72px;color:#111;">Niveau 0 - Phase construction 4 ARC</div>
<div style="left:1536px;top:309px;width:14px;height:1px;border-top:1px dotted #999"></div>
<div style="left:1550px;top:301px;width:279px;height:16px;background:#e3e3e3"></div>
<div class="t" style="left:1553.5px;top:301.0px;font-size:11.65px;color:#111;font-weight:bold;">Niveau 0 - Phase construction 5 ARC VAR 1M -1P</div>
<div style="left:1536px;top:327px;width:14px;height:1px;border-top:1px dotted #999"></div>
<div class="t" style="left:1553.5px;top:319.0px;font-size:11.72px;color:#111;">Niveau 0 - Phase construction 5 ARC VAR 2M-2P</div>
<div style="left:1536px;top:345px;width:14px;height:1px;border-top:1px dotted #999"></div>
<div class="t" style="left:1553.5px;top:337.0px;font-size:11.72px;color:#111;">Niveau 0 - Phase existante ARC</div>
<div style="left:1536px;top:363px;width:14px;height:1px;border-top:1px dotted #999"></div>
<div class="t" style="left:1553.5px;top:355.0px;font-size:11.72px;color:#111;">Niveau 1</div>
<div style="left:1536px;top:381px;width:14px;height:1px;border-top:1px dotted #999"></div>
<div class="t" style="left:1553.5px;top:373.0px;font-size:11.72px;color:#111;">Niveau 2</div>
<div style="left:1536px;top:399px;width:14px;height:1px;border-top:1px dotted #999"></div>
<div class="t" style="left:1553.5px;top:391.0px;font-size:11.72px;color:#111;">Plan Masse</div>
<svg style="left:1511px;top:413px" width="9" height="9" viewBox="0 0 9 9"><defs><linearGradient id="bx" x1="0" y1="0" x2="0" y2="1"><stop offset="0" stop-color="#f6f6f6"/><stop offset="1" stop-color="#d6d6d6"/></linearGradient></defs><rect x="0.5" y="0.5" width="8" height="8" fill="url(#bx)" stroke="#9a9a9a"/><path d="M2 4.5h5" stroke="#333"/><path d="M4.5 2v5" stroke="#333"/></svg>
<div style="left:1520px;top:417px;width:11px;height:1px;border-top:1px dotted #999"></div>
<div class="t" style="left:1533.4px;top:409.0px;font-size:11.72px;color:#111;">Plans de plafond</div>
<svg style="left:1511px;top:431px" width="9" height="9" viewBox="0 0 9 9"><defs><linearGradient id="bx" x1="0" y1="0" x2="0" y2="1"><stop offset="0" stop-color="#f6f6f6"/><stop offset="1" stop-color="#d6d6d6"/></linearGradient></defs><rect x="0.5" y="0.5" width="8" height="8" fill="url(#bx)" stroke="#9a9a9a"/><path d="M2 4.5h5" stroke="#333"/><path d="M4.5 2v5" stroke="#333"/></svg>
<div style="left:1520px;top:435px;width:11px;height:1px;border-top:1px dotted #999"></div>
<div class="t" style="left:1533.4px;top:427.0px;font-size:11.72px;color:#111;">Vues 3D</div>
<svg style="left:1511px;top:449px" width="9" height="9" viewBox="0 0 9 9"><defs><linearGradient id="bx" x1="0" y1="0" x2="0" y2="1"><stop offset="0" stop-color="#f6f6f6"/><stop offset="1" stop-color="#d6d6d6"/></linearGradient></defs><rect x="0.5" y="0.5" width="8" height="8" fill="url(#bx)" stroke="#9a9a9a"/><path d="M2 4.5h5" stroke="#333"/><path d="M4.5 2v5" stroke="#333"/></svg>
<div style="left:1520px;top:453px;width:11px;height:1px;border-top:1px dotted #999"></div>
<div class="t" style="left:1533.4px;top:445.0px;font-size:11.72px;color:#111;">Elévations</div>
<div style="left:1496px;top:471px;width:10px;height:1px;border-top:1px dotted #999"></div>
<svg style="left:1507px;top:463px" width="17" height="16" viewBox="0 0 17 16"><rect x="0.5" y="0.5" width="15" height="15" rx="1" fill="#fff" stroke="#333"/><rect x="1" y="1" width="14" height="2.5" fill="#666"/><rect x="2.5" y="5" width="3.5" height="3.5" fill="#fff" stroke="#444"/><circle cx="4.2" cy="11.8" r="1.8" fill="#666"/><path d="M7.5 6.5h6M7.5 9h6M7.5 12h6" stroke="#555" stroke-dasharray="2 1"/></svg>
<div class="t" style="left:1529.5px;top:463.0px;font-size:11.22px;color:#111;">Légendes</div>
<svg style="left:1491px;top:485px" width="9" height="9" viewBox="0 0 9 9"><defs><linearGradient id="bx" x1="0" y1="0" x2="0" y2="1"><stop offset="0" stop-color="#f6f6f6"/><stop offset="1" stop-color="#d6d6d6"/></linearGradient></defs><rect x="0.5" y="0.5" width="8" height="8" fill="url(#bx)" stroke="#9a9a9a"/><path d="M2 4.5h5" stroke="#333"/><path d="M4.5 2v5" stroke="#333"/></svg>
<div style="left:1500px;top:489px;width:6px;height:1px;border-top:1px dotted #999"></div>
<svg style="left:1507px;top:483px" width="17" height="16" viewBox="0 0 17 16"><rect x="0.5" y="0.5" width="14" height="11" fill="#fff" stroke="#333"/><rect x="1" y="1" width="13" height="2" fill="#666"/><path d="M1 5.5h13M1 8.5h13M4.5 3v9" stroke="#555"/></svg>
<div class="t" style="left:1529.5px;top:481.0px;font-size:12.08px;color:#111;">Nomenclatures/Quantités (tout)</div>
<div style="left:1496px;top:507px;width:10px;height:1px;border-top:1px dotted #999"></div>
<svg style="left:1507px;top:500px" width="17" height="16" viewBox="0 0 17 16"><path d="M0.5 0.5h11l3.5 3.5v9.5H0.5z" fill="#fff" stroke="#333"/><path d="M2.5 12V6h5M4.5 12V8.5h2.5V12M12 8v4" fill="none" stroke="#555"/></svg>
<div class="t" style="left:1529.5px;top:499.0px;font-size:11.67px;color:#111;">Feuilles (tout)</div>
<svg style="left:1491px;top:521px" width="9" height="9" viewBox="0 0 9 9"><defs><linearGradient id="bx" x1="0" y1="0" x2="0" y2="1"><stop offset="0" stop-color="#f6f6f6"/><stop offset="1" stop-color="#d6d6d6"/></linearGradient></defs><rect x="0.5" y="0.5" width="8" height="8" fill="url(#bx)" stroke="#9a9a9a"/><path d="M2 4.5h5" stroke="#333"/><path d="M4.5 2v5" stroke="#333"/></svg>
<div style="left:1500px;top:525px;width:6px;height:1px;border-top:1px dotted #999"></div>
<svg style="left:1508px;top:518px" width="17" height="16" viewBox="0 0 17 16"><path d="M1.5 0.5h5v7h7v6h-13z" fill="#eee" stroke="#333"/><path d="M8.5 0.5h5v5h-5z" fill="#fff" stroke="#333"/></svg>
<div class="t" style="left:1529.5px;top:517.0px;font-size:11.15px;color:#111;">Familles</div>
<svg style="left:1491px;top:539px" width="9" height="9" viewBox="0 0 9 9"><defs><linearGradient id="bx" x1="0" y1="0" x2="0" y2="1"><stop offset="0" stop-color="#f6f6f6"/><stop offset="1" stop-color="#d6d6d6"/></linearGradient></defs><rect x="0.5" y="0.5" width="8" height="8" fill="url(#bx)" stroke="#9a9a9a"/><path d="M2 4.5h5" stroke="#333"/><path d="M4.5 2v5" stroke="#333"/></svg>
<div style="left:1500px;top:543px;width:6px;height:1px;border-top:1px dotted #999"></div>
<svg style="left:1508px;top:536px" width="17" height="16" viewBox="0 0 17 16"><path d="M3 0.5H0.5v14H3M12 0.5h2.5v14H12" fill="none" stroke="#333"/><circle cx="6.5" cy="6" r="3.5" fill="#ddd" stroke="#444"/><rect x="6.5" y="6.5" width="5" height="5" rx="1.5" fill="#eee" stroke="#444"/></svg>
<div class="t" style="left:1529.5px;top:535.0px;font-size:11.26px;color:#111;">Groupes</div>
<svg style="left:1491px;top:557px" width="9" height="9" viewBox="0 0 9 9"><defs><linearGradient id="bx" x1="0" y1="0" x2="0" y2="1"><stop offset="0" stop-color="#f6f6f6"/><stop offset="1" stop-color="#d6d6d6"/></linearGradient></defs><rect x="0.5" y="0.5" width="8" height="8" fill="url(#bx)" stroke="#9a9a9a"/><path d="M2 4.5h5" stroke="#333"/><path d="M4.5 2v5" stroke="#333"/></svg>
<div style="left:1500px;top:561px;width:6px;height:1px;border-top:1px dotted #999"></div>
<svg style="left:1507px;top:557px" width="17" height="16" viewBox="0 0 17 16"><ellipse cx="4.5" cy="4" rx="3.8" ry="3" fill="none" stroke="#d4a000" stroke-width="2"/><ellipse cx="11.5" cy="4" rx="3.8" ry="3" fill="none" stroke="#d4a000" stroke-width="2"/><path d="M4 4h8" stroke="#d4a000" stroke-width="2"/></svg>
<div class="t" style="left:1529.5px;top:553.0px;font-size:11.16px;color:#111;">Liens Revit</div>
<div style="left:294px;top:204px;width:957px;height:743px;background:#f0f0f0;border:1px solid #9a9a9a;box-shadow:0 2px 14px rgba(0,0,0,0.32)"></div>
<div style="left:295px;top:205px;width:955px;height:30px;background:#ffffff"></div>
<div class="t" style="left:303.5px;top:210.8px;font-size:11.75px;color:#9a9a9a;">Remplacements visibilité / graphisme pour Plan d'étage: Niveau 0 - Phase construction 5 ARC VAR 1M -1P</div>
<svg style="left:1230px;top:214px" width="11" height="11" viewBox="0 0 11 11"><path d="M0.5 0.5l10 10M10.5 0.5l-10 10" stroke="#8a8a8a" stroke-width="1"/></svg>
<div style="left:1000px;top:262px;width:242px;height:647px;background:#ffffff;border:1px solid #d5d5d5"></div>
<div style="left:1000px;top:292px;width:230px;height:2px;background:#6e6e6e"></div>
<div style="left:1000px;top:294px;width:230px;height:39px;background:#f0f0f0"></div>
<div style="left:1000px;top:333px;width:230px;height:1.5px;background:#6e6e6e"></div>
<div style="left:1000px;top:334px;width:230px;height:530px;background:#fff;border-right:1px solid #d8d8d8;border-bottom:1px solid #d8d8d8"></div>
<div style="left:1090px;top:917px;width:72px;height:21px;background:#cccccc;border:1px solid #bfbfbf"></div>
<div style="left:1170px;top:917px;width:73px;height:21px;background:#e1e1e1;border:1px solid #adadad"></div>
<div class="t" style="left:1195.0px;top:919.5px;font-size:11.50px;color:#111;">Aide</div>
<svg style="left:1240px;top:934px" width="10" height="10" viewBox="0 0 10 10"><g fill="#b8b8b8"><rect x="8" y="0" width="2" height="2"/><rect x="4" y="4" width="2" height="2"/><rect x="8" y="4" width="2" height="2"/><rect x="0" y="8" width="2" height="2"/><rect x="4" y="8" width="2" height="2"/><rect x="8" y="8" width="2" height="2"/></g></svg>
<div style="left:243px;top:220px;width:905px;height:778px;background:#f0f0f0;border:1px solid #5c5c5c;box-shadow:0 3px 16px rgba(0,0,0,0.38)"></div>
<div style="left:244px;top:221px;width:903px;height:30px;background:#ffffff"></div>
<div class="t" style="left:252.3px;top:228.0px;font-size:11.49px;color:#111;">Paramètres d'affichage des liens RVT</div>
<svg style="left:1127px;top:230px" width="11" height="11" viewBox="0 0 11 11"><path d="M0.5 0.5l10 10M10.5 0.5l-10 10" stroke="#111" stroke-width="1.1"/></svg>
<div style="left:250px;top:279px;width:889px;height:681px;background:#ffffff;border:1px solid #d9d9d9"></div>
<div style="left:333px;top:261px;width:120.60000000000002px;height:19px;background:#f0f0f0;border:1px solid #d9d9d9;border-bottom:none"></div>
<div class="t" style="left:337.4px;top:262.0px;font-size:10.60px;color:#111;">Catégories de modèles</div>
<div style="left:452.6px;top:261px;width:132.89999999999998px;height:19px;background:#f0f0f0;border:1px solid #d9d9d9;border-bottom:none"></div>
<div class="t" style="left:458.6px;top:262.0px;font-size:10.84px;color:#111;">Catégories d'annotations</div>
<div style="left:584.5px;top:261px;width:180.0px;height:19px;background:#f0f0f0;border:1px solid #d9d9d9;border-bottom:none"></div>
<div class="t" style="left:590.8px;top:262.0px;font-size:10.65px;color:#111;">Catégories de modèles analytiques</div>
<div style="left:763.5px;top:261px;width:129.89999999999998px;height:19px;background:#f0f0f0;border:1px solid #d9d9d9;border-bottom:none"></div>
<div class="t" style="left:769.5px;top:262.0px;font-size:10.79px;color:#111;">Catégories d'importation</div>
<div style="left:892.4px;top:261px;width:56.10000000000002px;height:19px;background:#f0f0f0;border:1px solid #d9d9d9;border-bottom:none"></div>
<div class="t" style="left:898.6px;top:262.0px;font-size:10.77px;color:#111;">Variantes</div>
<div style="left:250px;top:258px;width:84px;height:22px;background:#ffffff;border:1px solid #d9d9d9;border-bottom:none"></div>
<div class="t" style="left:257.5px;top:260.0px;font-size:10.56px;color:#111;">Outils de base</div>
<svg style="left:288.9px;top:317.8px" width="13" height="13" viewBox="0 0 13 13"><circle cx="6.5" cy="6.5" r="6" fill="#fff" stroke="#333" stroke-width="1"/></svg>
<div class="t" style="left:304.5px;top:317.0px;font-size:10.86px;color:#111;">Par vue d'hôte</div>
<svg style="left:402.7px;top:317.8px" width="13" height="13" viewBox="0 0 13 13"><circle cx="6.5" cy="6.5" r="6" fill="#fff" stroke="#333" stroke-width="1"/></svg>
<div class="t" style="left:418.5px;top:317.0px;font-size:10.51px;color:#111;">Par vue liée</div>
<svg style="left:517.0px;top:317.8px" width="13" height="13" viewBox="0 0 13 13"><circle cx="6.5" cy="6.5" r="6" fill="#fff" stroke="#333" stroke-width="1"/><circle cx="6.5" cy="6.5" r="3.5" fill="#111"/></svg>
<div class="t" style="left:532.5px;top:317.0px;font-size:10.36px;color:#111;">Personnalisé</div>
<div class="t" style="left:276.2px;top:345.7px;font-size:10.59px;color:#111;">Vue liée:</div>
<div class="t" style="left:276.2px;top:371.6px;font-size:10.94px;color:#111;">Filtres de vue:</div>
<div class="t" style="left:276.2px;top:397.6px;font-size:10.72px;color:#111;">Plage de la vue:</div>
<div class="t" style="left:276.2px;top:423.8px;font-size:10.57px;color:#111;">Phase:</div>
<div class="t" style="left:276.2px;top:450.0px;font-size:10.78px;color:#111;">Filtre des phases:</div>
<div class="t" style="left:276.2px;top:476.0px;font-size:10.83px;color:#111;">Niveau de détail:</div>
<div class="t" style="left:276.2px;top:502.0px;font-size:10.27px;color:#111;">Discipline:</div>
<div class="t" style="left:276.2px;top:528.0px;font-size:11.09px;color:#111;">Motif/Couleur:</div>
<div class="t" style="left:276.2px;top:554.0px;font-size:11.02px;color:#111;">Styles d'objets:</div>
<div class="t" style="left:276.2px;top:580.0px;font-size:10.38px;color:#111;">Liens imbriqués:</div>
<div style="left:403px;top:342.5px;width:408px;height:21px;background:#e5e5e5;border:1px solid #adadad"></div>
<div class="t" style="left:406.8px;top:345.0px;font-size:10.71px;color:#111;">Plan d'étage: Niveau 0 - Phase de construction 5 - Variante 1M1P</div>
<svg style="left:796px;top:350.5px" width="11" height="7" viewBox="0 0 11 7"><path d="M0.5 0.5l5 5 5-5" fill="none" stroke="#333" stroke-width="1.1"/></svg>
<div style="left:403px;top:368.5px;width:408px;height:21px;background:#e5e5e5;border:1px solid #adadad"></div>
<div class="t" style="left:406.8px;top:371.0px;font-size:11.21px;color:#111;">&lt;Par vue d'hôte&gt;</div>
<svg style="left:796px;top:376.5px" width="11" height="7" viewBox="0 0 11 7"><path d="M0.5 0.5l5 5 5-5" fill="none" stroke="#333" stroke-width="1.1"/></svg>
<div style="left:403px;top:394.5px;width:408px;height:21px;background:#e5e5e5;border:1px solid #adadad"></div>
<div class="t" style="left:406.8px;top:397.0px;font-size:11.21px;color:#111;">&lt;Par vue d'hôte&gt;</div>
<svg style="left:796px;top:402.5px" width="11" height="7" viewBox="0 0 11 7"><path d="M0.5 0.5l5 5 5-5" fill="none" stroke="#333" stroke-width="1.1"/></svg>
<div style="left:403px;top:420.5px;width:408px;height:21px;background:#e5e5e5;border:1px solid #adadad"></div>
<div class="t" style="left:406.8px;top:423.0px;font-size:10.87px;color:#111;">&lt;Par vue liée&gt; (Phase de construction 5)</div>
<svg style="left:796px;top:428.5px" width="11" height="7" viewBox="0 0 11 7"><path d="M0.5 0.5l5 5 5-5" fill="none" stroke="#333" stroke-width="1.1"/></svg>
<div style="left:403px;top:446px;width:408px;height:21px;background:#cce4f7;border:1px solid #0078d7"></div>
<div class="t" style="left:406.8px;top:448.5px;font-size:10.95px;color:#111;">Composants existants + nouveaux</div>
<svg style="left:796px;top:454px" width="11" height="7" viewBox="0 0 11 7"><path d="M0.5 0.5l5 5 5-5" fill="none" stroke="#333" stroke-width="1.1"/></svg>
<div style="left:403px;top:466px;width:408px;height:146px;background:#ffffff;border:1px solid #646464;box-shadow:2px 3px 4px rgba(0,0,0,0.25)"></div>
<div class="t" style="left:406.5px;top:466.8px;font-size:10.67px;color:#111;">&lt;Par vue d'hôte&gt; (Afficher tout)</div>
<div class="t" style="left:406.5px;top:479.8px;font-size:10.67px;color:#111;">&lt;Par vue liée&gt; (Afficher tout Tuto.com)</div>
<div class="t" style="left:405.5px;top:492.8px;font-size:10.67px;color:#111;">Aucun(e)</div>
<div class="t" style="left:405.5px;top:505.8px;font-size:10.67px;color:#111;">Afficher tout</div>
<div class="t" style="left:405.5px;top:518.8px;font-size:10.67px;color:#111;">Afficher tout Tuto.com</div>
<div class="t" style="left:405.5px;top:531.8px;font-size:10.67px;color:#111;">Composants démolis + nouveaux</div>
<div class="t" style="left:405.5px;top:544.8px;font-size:10.67px;color:#111;">Composants existants + démolis</div>
<div style="left:404px;top:559.3px;width:406px;height:13px;background:#0078d7"></div>
<div class="t" style="left:405.5px;top:557.8px;font-size:10.67px;color:#fff;">Composants existants + nouveaux</div>
<div class="t" style="left:405.5px;top:570.8px;font-size:10.67px;color:#111;">Démoli</div>
<div class="t" style="left:405.5px;top:583.8px;font-size:10.67px;color:#111;">Nouveaux</div>
<div class="t" style="left:405.5px;top:596.8px;font-size:10.67px;color:#111;">Phase précédente</div>
<svg style="left:485px;top:455.5px" width="12" height="18" viewBox="0 0 12 18"><path d="M0.5 0.5v15l3.6-3.4 2.6 5.2 2.2-1-2.6-5.1h5z" fill="#fff" stroke="#000" stroke-width="1" stroke-linejoin="round"/></svg>
<div style="left:824px;top:968px;width:73px;height:21px;background:#e1e1e1;border:2px solid #0078d7"></div>
<div class="t" style="left:852.2px;top:970.5px;font-size:11.50px;color:#111;">OK</div>
<div style="left:905px;top:968px;width:73px;height:21px;background:#e1e1e1;border:1px solid #adadad"></div>
<div class="t" style="left:921.6px;top:970.5px;font-size:11.50px;color:#111;">Annuler</div>
<div style="left:986px;top:968px;width:73px;height:21px;background:#e1e1e1;border:1px solid #adadad"></div>
<div class="t" style="left:998.1px;top:970.5px;font-size:11.50px;color:#111;">Appliquer</div>
<div style="left:1067px;top:968px;width:73px;height:21px;background:#e1e1e1;border:1px solid #adadad"></div>
<div class="t" style="left:1092.0px;top:970.5px;font-size:11.50px;color:#111;">Aide</div>
<svg style="left:1137px;top:987px" width="10" height="10" viewBox="0 0 10 10"><g fill="#b8b8b8"><rect x="8" y="0" width="2" height="2"/><rect x="4" y="4" width="2" height="2"/><rect x="8" y="4" width="2" height="2"/><rect x="0" y="8" width="2" height="2"/><rect x="4" y="8" width="2" height="2"/><rect x="8" y="8" width="2" height="2"/></g></svg>
</body></html>
